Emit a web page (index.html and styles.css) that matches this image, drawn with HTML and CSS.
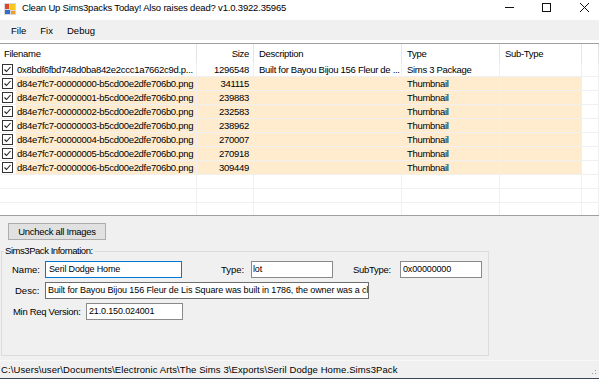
FILE: index.html
```html
<!DOCTYPE html>
<html lang="en">
<head>
  <meta charset="UTF-8">
  <title>Clean Up Sims3packs Today!</title>
  <link rel="stylesheet" href="styles.css">
</head>
<body>

<div class="window">
  <!-- title bar -->
  <div class="titlebar">
    <svg class="app-icon" width="12" height="12" viewBox="0 0 12 12">
      <rect x="0" y="0" width="12" height="12" fill="#d8d8d8"/>
      <rect x="1" y="1" width="4" height="5" fill="#e2462a"/>
      <rect x="6" y="1" width="5" height="6" fill="#f6c623"/>
      <rect x="1" y="7" width="5" height="4" fill="#2f6fd1"/>
      <rect x="7" y="8" width="4" height="3" fill="#f19a2c"/>
    </svg>
    <span class="title">Clean Up Sims3packs Today! Also raises dead? v1.0.3922.35965</span>
    <div class="controls">
      <svg width="9" height="9" viewBox="0 0 9 9"><line x1="0" y1="4.5" x2="9" y2="4.5" stroke="#111" stroke-width="1"/></svg>
      <svg class="ctl-max" width="9" height="9" viewBox="0 0 9 9"><rect x="0.5" y="0.5" width="8" height="8" fill="none" stroke="#111" stroke-width="1"/></svg>
      <svg class="ctl-close" width="9" height="9" viewBox="0 0 9 9"><path d="M0 0 L9 9 M9 0 L0 9" stroke="#111" stroke-width="1"/></svg>
    </div>
  </div>

  <!-- menu -->
  <div class="menubar">
    <span class="menu-item">File</span>
    <span class="menu-item">Fix</span>
    <span class="menu-item">Debug</span>
  </div>

  <!-- file list -->
  <div class="list">
    <div class="lv-row lv-head">
      <div class="lv-cell head-name">Filename</div>
      <div class="lv-cell size">Size</div>
      <div class="lv-cell">Description</div>
      <div class="lv-cell">Type</div>
      <div class="lv-cell">Sub-Type</div>
      <div class="lv-cell"></div>
    </div>

    <div class="lv-row">
      <div class="lv-cell name-cell"><span class="check"></span><span class="fname">0x8bdf6fbd748d0ba842e2ccc1a7662c9d.p...</span></div>
      <div class="lv-cell size">1296548</div>
      <div class="lv-cell">Built for Bayou Bijou 156 Fleur de ...</div>
      <div class="lv-cell">Sims 3 Package</div>
      <div class="lv-cell"></div>
      <div class="lv-cell"></div>
    </div>

    <div class="lv-row thumb">
      <div class="lv-cell name-cell"><span class="check"></span><span class="fname">d84e7fc7-00000000-b5cd00e2dfe706b0.png</span></div>
      <div class="lv-cell size">341115</div>
      <div class="lv-cell"></div>
      <div class="lv-cell">Thumbnail</div>
      <div class="lv-cell"></div>
      <div class="lv-cell"></div>
    </div>
    <div class="lv-row thumb">
      <div class="lv-cell name-cell"><span class="check"></span><span class="fname">d84e7fc7-00000001-b5cd00e2dfe706b0.png</span></div>
      <div class="lv-cell size">239883</div>
      <div class="lv-cell"></div>
      <div class="lv-cell">Thumbnail</div>
      <div class="lv-cell"></div>
      <div class="lv-cell"></div>
    </div>
    <div class="lv-row thumb">
      <div class="lv-cell name-cell"><span class="check"></span><span class="fname">d84e7fc7-00000002-b5cd00e2dfe706b0.png</span></div>
      <div class="lv-cell size">232583</div>
      <div class="lv-cell"></div>
      <div class="lv-cell">Thumbnail</div>
      <div class="lv-cell"></div>
      <div class="lv-cell"></div>
    </div>
    <div class="lv-row thumb">
      <div class="lv-cell name-cell"><span class="check"></span><span class="fname">d84e7fc7-00000003-b5cd00e2dfe706b0.png</span></div>
      <div class="lv-cell size">238962</div>
      <div class="lv-cell"></div>
      <div class="lv-cell">Thumbnail</div>
      <div class="lv-cell"></div>
      <div class="lv-cell"></div>
    </div>
    <div class="lv-row thumb">
      <div class="lv-cell name-cell"><span class="check"></span><span class="fname">d84e7fc7-00000004-b5cd00e2dfe706b0.png</span></div>
      <div class="lv-cell size">270007</div>
      <div class="lv-cell"></div>
      <div class="lv-cell">Thumbnail</div>
      <div class="lv-cell"></div>
      <div class="lv-cell"></div>
    </div>
    <div class="lv-row thumb">
      <div class="lv-cell name-cell"><span class="check"></span><span class="fname">d84e7fc7-00000005-b5cd00e2dfe706b0.png</span></div>
      <div class="lv-cell size">270918</div>
      <div class="lv-cell"></div>
      <div class="lv-cell">Thumbnail</div>
      <div class="lv-cell"></div>
      <div class="lv-cell"></div>
    </div>
    <div class="lv-row thumb">
      <div class="lv-cell name-cell"><span class="check"></span><span class="fname">d84e7fc7-00000006-b5cd00e2dfe706b0.png</span></div>
      <div class="lv-cell size">309449</div>
      <div class="lv-cell"></div>
      <div class="lv-cell">Thumbnail</div>
      <div class="lv-cell"></div>
      <div class="lv-cell"></div>
    </div>

    <div class="lv-row"><div class="lv-cell"></div><div class="lv-cell"></div><div class="lv-cell"></div><div class="lv-cell"></div><div class="lv-cell"></div><div class="lv-cell"></div></div>
    <div class="lv-row"><div class="lv-cell"></div><div class="lv-cell"></div><div class="lv-cell"></div><div class="lv-cell"></div><div class="lv-cell"></div><div class="lv-cell"></div></div>
    <div class="lv-row"><div class="lv-cell"></div><div class="lv-cell"></div><div class="lv-cell"></div><div class="lv-cell"></div><div class="lv-cell"></div><div class="lv-cell"></div></div>
  </div>

  <!-- details -->
  <div class="panel">
    <button class="btn">Uncheck all Images</button>

    <fieldset class="group">
      <legend>Sims3Pack Infomation:</legend>

      <div class="field-row row-top">
        <span class="lbl lbl-name">Name:</span>
        <div class="tb tb-name focused">Seril Dodge Home</div>
        <span class="lbl lbl-type">Type:</span>
        <div class="tb tb-type">lot</div>
        <span class="lbl lbl-sub">SubType:</span>
        <div class="tb tb-sub">0x00000000</div>
      </div>

      <div class="field-row row-desc">
        <span class="lbl lbl-desc">Desc:</span>
        <div class="tb tb-desc">Built for Bayou Bijou 156 Fleur de Lis Square was built in 1786, the owner was a close friend of the family</div>
      </div>

      <div class="field-row row-ver">
        <span class="lbl lbl-ver">Min Req Version:</span>
        <div class="tb tb-ver">21.0.150.024001</div>
      </div>
    </fieldset>
  </div>

  <!-- status -->
  <div class="statusbar">
    <span class="status-text">C:\Users\user\Documents\Electronic Arts\The Sims 3\Exports\Seril Dodge Home.Sims3Pack</span>
    <svg class="grip" width="6" height="6" viewBox="0 0 6 6">
      <rect x="4" y="0" width="1" height="1" fill="#999"/>
      <rect x="4" y="3" width="1" height="1" fill="#999"/>
      <rect x="1" y="3" width="1" height="1" fill="#999"/>
    </svg>
  </div>
</div>

</body>
</html>
```

FILE: styles.css
```css
body {
  margin: 0;
  font-family: "Liberation Sans", Arial, sans-serif;
  font-size: 9.5px;
  color: #000;
  background-color: #f0f0f0;
}
.window {
  width: 599px;
  height: 379px;
  display: flex;
  flex-direction: column;
  overflow: hidden;
  border-bottom: 1px solid #3a4656;
  box-sizing: border-box;
}

/* title bar */
.titlebar {
  height: 20px;
  flex: none;
  display: flex;
  align-items: flex-start;
  padding-top: 3px;
  box-sizing: border-box;
  background-color: #fff;
}
.app-icon {
  margin-left: 4px;
}
.title {
  margin-left: 6px;
  margin-top: -1px;
  line-height: 12px;
  letter-spacing: -0.18px;
}
.controls {
  margin-left: auto;
  padding-right: 10px;
  display: flex;
}
.ctl-max {
  margin-left: 28px;
}
.ctl-close {
  margin-left: 29px;
}

/* menu */
.menubar {
  flex: none;
  display: flex;
  align-items: center;
  padding-left: 4px;
  padding-top: 1px;
  height: 19px;
  background-color: #f0f0f0;
  border-bottom: 3px solid #fff;
}
.menu-item {
  padding: 0 7px;
}

/* list view */
.list {
  height: 173px;
  flex: none;
  box-sizing: border-box;
  overflow: hidden;
  background-color: #fff;
  border-top: 1px solid #a0a0a0;
  border-bottom: 1px solid #a0a0a0;
  letter-spacing: -0.3px;
}
.lv-row {
  display: grid;
  grid-template-columns: 197px 57px 148px 98px 82px 1fr;
  height: 14px;
}
.lv-cell {
  border-right: 1px solid #f0f0f0;
  border-bottom: 1px solid #f0f0f0;
  box-sizing: border-box;
  overflow: hidden;
  white-space: nowrap;
  padding: 1px 0 0 5px;
  line-height: 12px;
}
.lv-head {
  height: 19px;
}
.lv-head .lv-cell {
  border-bottom: none;
  border-right-color: #e5e5e5;
  padding-top: 0;
  line-height: 19px;
}
.lv-head .head-name {
  padding-left: 4px;
}
.size {
  text-align: right;
  padding-left: 0;
  padding-right: 4px;
}
.thumb .lv-cell:nth-child(2),
.thumb .lv-cell:nth-child(3),
.thumb .lv-cell:nth-child(4),
.thumb .lv-cell:nth-child(5) {
  background-color: #ffebcd;
}
.name-cell {
  display: flex;
  align-items: stretch;
  padding: 0;
}
.check {
  flex: none;
  width: 11px;
  height: 11px;
  margin: 1px 3px 0 2px;
  box-sizing: border-box;
  border: 1px solid #333;
  background: #fff url("data:image/svg+xml,%3Csvg xmlns='http://www.w3.org/2000/svg' width='9' height='9'%3E%3Cpath d='M1.5 4.5 L3.5 6.5 L7.5 2' fill='none' stroke='%23222' stroke-width='1.1'/%3E%3C/svg%3E") no-repeat center;
}
.fname {
  flex: 1;
  padding: 1px 0 0 1px;
  line-height: 12px;
  overflow: hidden;
}
.thumb .fname {
  background-color: #ffebcd;
}

/* details panel */
.panel {
  flex: 1;
  padding-top: 7px;
}
.btn {
  display: block;
  margin-left: 8px;
  width: 98px;
  height: 17px;
  padding: 0;
  font: inherit;
  letter-spacing: -0.3px;
  color: #000;
  background-color: #e1e1e1;
  border: 1px solid #adadad;
}
.group {
  margin: 5px 0 0 1px;
  width: 488px;
  box-sizing: border-box;
  padding: 4px 0 35px 0;
  border: 1px solid #dcdcdc;
}
.group legend {
  margin-left: 2px;
  padding: 0 1px;
  line-height: 12px;
  letter-spacing: -0.45px;
}
.field-row {
  display: flex;
  align-items: center;
  height: 17px;
  margin-bottom: 4px;
}
.row-top {
  padding-left: 10px;
}
.row-desc {
  padding-left: 13px;
}
.row-ver {
  padding-left: 11px;
  margin-bottom: 0;
}
.lbl {
  flex: none;
  white-space: nowrap;
}
.lbl-name { width: 33px; }
.lbl-type { width: 30px; margin-left: 39px; }
.lbl-sub { width: 47px; margin-left: 20px; letter-spacing: -0.3px; }
.lbl-desc { width: 30px; }
.lbl-ver { width: 73px; letter-spacing: -0.3px; }

.tb {
  flex: none;
  height: 17px;
  box-sizing: border-box;
  padding-left: 2px;
  font-size: 9px;
  letter-spacing: -0.15px;
  line-height: 15px;
  white-space: nowrap;
  overflow: hidden;
  background-color: #fff;
  border: 1px solid #8a8a8a;
}
.focused {
  border-color: #0078d7;
  padding-left: 3px;
}
.tb-name { width: 137px; }
.tb-type { width: 82px; padding-left: 1px; }
.tb-sub { width: 82px; }
.tb-desc { width: 324px; border-color: #6e6e6e; letter-spacing: -0.1px; }
.tb-ver { width: 97px; }

/* status bar */
.statusbar {
  height: 18px;
  flex: none;
  box-sizing: border-box;
  display: flex;
  align-items: center;
  padding-left: 1px;
  border-top: 1px solid #f7f7f7;
  background-color: #f0f0f0;
}
.status-text {
  white-space: nowrap;
  letter-spacing: 0.1px;
}
.grip {
  margin-left: auto;
  margin-right: 2px;
  align-self: flex-end;
  margin-bottom: 2px;
}
```
